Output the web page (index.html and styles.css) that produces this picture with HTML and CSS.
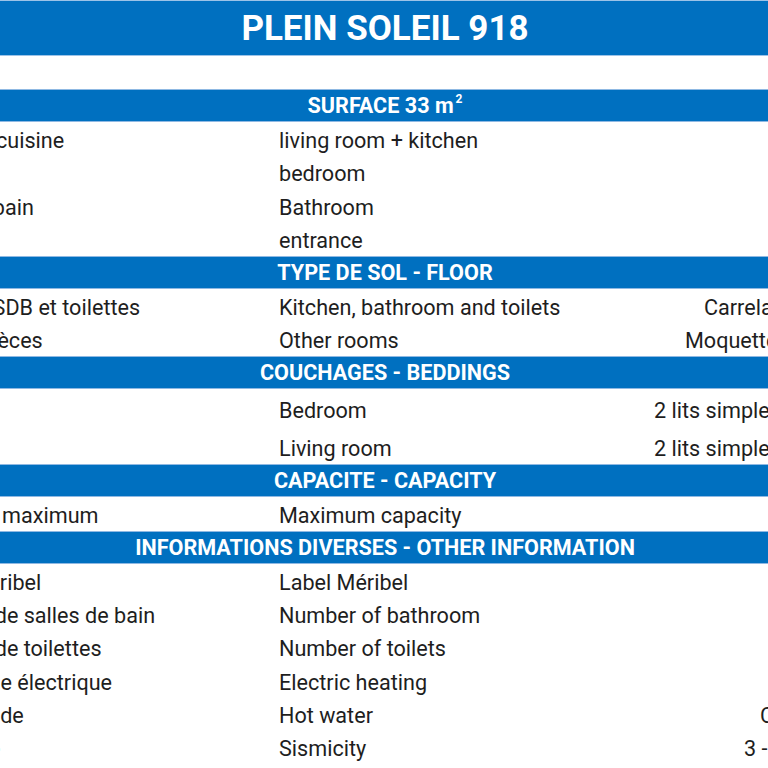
FILE: index.html
```html
<!DOCTYPE html>
<html lang="fr">
<head>
<meta charset="utf-8">
<title>Plein Soleil 918</title>
<link rel="stylesheet" href="styles.css">
</head>
<body>
<div class="sheet">
  <div class="title">PLEIN SOLEIL 918</div>
  <div class="blank"></div>

  <div class="band">SURFACE 33 m<sup>2</sup></div>
  <div class="row"><span class="c1">Séjour + cuisine</span><span class="c2">living room + kitchen</span><span class="c3"></span></div>
  <div class="row"><span class="c1">Chambre</span><span class="c2">bedroom</span><span class="c3"></span></div>
  <div class="row"><span class="c1">Salle de bain</span><span class="c2">Bathroom</span><span class="c3"></span></div>
  <div class="row"><span class="c1">Entrée</span><span class="c2">entrance</span><span class="c3"></span></div>

  <div class="band">TYPE DE SOL - FLOOR</div>
  <div class="row"><span class="c1">Cuisine, SDB et toilettes</span><span class="c2">Kitchen, bathroom and toilets</span><span class="c3 tile">Carrelage</span></div>
  <div class="row"><span class="c1">Autres pièces</span><span class="c2">Other rooms</span><span class="c3 carpet">Moquette</span></div>

  <div class="band">COUCHAGES - BEDDINGS</div>
  <div class="row tall"><span class="c1">Chambre</span><span class="c2">Bedroom</span><span class="c3 beds">2 lits simples</span></div>
  <div class="row tall"><span class="c1">Séjour</span><span class="c2">Living room</span><span class="c3 beds">2 lits simples</span></div>

  <div class="band">CAPACITE - CAPACITY</div>
  <div class="row"><span class="c1">Capacité maximum</span><span class="c2">Maximum capacity</span><span class="c3"></span></div>

  <div class="band">INFORMATIONS DIVERSES - OTHER INFORMATION</div>
  <div class="row"><span class="c1">Label Méribel</span><span class="c2">Label Méribel</span><span class="c3"></span></div>
  <div class="row"><span class="c1">Nombre de salles de bain</span><span class="c2">Number of bathroom</span><span class="c3"></span></div>
  <div class="row"><span class="c1">Nombre de toilettes</span><span class="c2">Number of toilets</span><span class="c3"></span></div>
  <div class="row"><span class="c1">Chauffage électrique</span><span class="c2">Electric heating</span><span class="c3"></span></div>
  <div class="row"><span class="c1">Eau chaude</span><span class="c2">Hot water</span><span class="c3 water">Collective</span></div>
  <div class="row"><span class="c1">Sismicité</span><span class="c2">Sismicity</span><span class="c3 seismic">3 - Modérée</span></div>
</div>
</body>
</html>
```

FILE: styles.css
```css
html, body {
  margin: 0;
  padding: 0;
  background: #ffffff;
  overflow: hidden;
}

.sheet {
  width: 970px;
  margin-left: -100px;
  font-family: Roboto, "Liberation Sans", sans-serif;
  color: #1e1e1e;
}

.title {
  height: 54px;
  margin-top: 1px;
  background: #0070c0;
  color: #ffffff;
  font-weight: 700;
  font-size: 35px;
  display: flex;
  align-items: center;
  justify-content: center;
  box-shadow: 0 -1px 0 #9cc3e8, 0 1px 0 #9cc3e8;
}

.blank {
  height: 34px;
}

.band {
  height: 33.33px;
  box-sizing: border-box;
  background: #0070c0;
  color: #ffffff;
  font-weight: 700;
  font-size: 21.6px;
  display: flex;
  align-items: center;
  justify-content: center;
  border-top: 1px solid #8fb9e3;
  border-bottom: 1px solid #8fb9e3;
}

.band sup {
  font-size: 12px;
  align-self: flex-start;
  margin-top: 2px;
  margin-left: 2px;
}

.row {
  height: 33.33px;
  box-sizing: border-box;
  padding-top: 3px;
  display: grid;
  grid-template-columns: 376px 364px 230px;
  align-items: center;
  font-size: 21.6px;
  white-space: nowrap;
}

.row.tall {
  height: 37.5px;
  padding-top: 6px;
}

.c1 {
  padding-left: 12px;
}

.c2 {
  padding-left: 3px;
}

.c3 {
  padding-left: 0;
}

.c3.tile { padding-left: 64px; }
.c3.carpet { padding-left: 45px; }
.c3.beds { padding-left: 14px; }
.c3.water { padding-left: 120px; }
.c3.seismic { padding-left: 104px; }
```
